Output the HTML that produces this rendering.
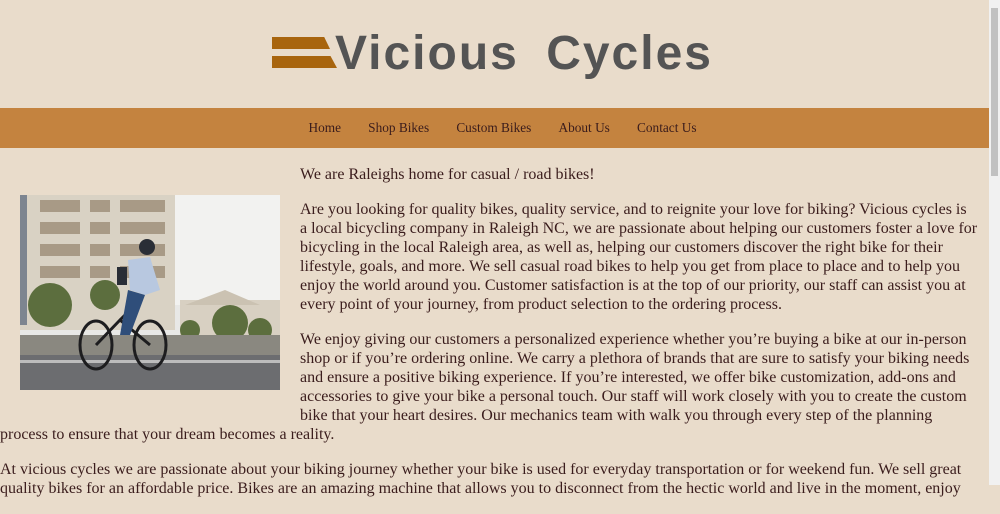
<!DOCTYPE html>
<html><head><meta charset="utf-8"><style>
html,body{margin:0;padding:0;}
body{width:1000px;height:485px;overflow:hidden;background:#e9dccb;font-family:"Liberation Serif",serif;color:#3a1c1c;position:relative;}
.wrap{width:989px;position:absolute;left:0;top:0;}
header{height:108px;position:relative;}
.bar{position:absolute;background:#a8650e;height:12px;}
.logotext{position:absolute;left:335px;top:24px;font-family:"Liberation Sans",sans-serif;font-weight:bold;font-size:48px;color:#545454;letter-spacing:2px;word-spacing:12px;white-space:nowrap;line-height:60px;}
nav{height:40px;background:#c4833f;text-align:center;font-size:13.3px;line-height:40px;padding-left:16px;}
nav span{display:inline-block;margin:0 13.6px;}
.content{position:relative;font-size:16px;line-height:19px;padding-top:1px;}
.content p{margin:16px 0;}
.l{white-space:nowrap;}
.img{position:absolute;left:20px;top:47px;width:260px;height:195px;}
.ind{padding-left:300px;}
.sb{position:absolute;right:0;top:0;width:11px;height:485px;background:#f1f1f1;}
.sb div{position:absolute;left:2px;top:8px;width:7px;height:168px;background:#c1c1c1;}
</style></head><body>
<div class="wrap">
<header>
<div class="bar" style="left:272px;top:37px;width:58px;clip-path:polygon(0 0,90% 0,100% 100%,0 100%);"></div>
<div class="bar" style="left:272px;top:56px;width:65px;clip-path:polygon(0 0,90% 0,100% 100%,0 100%);"></div>
<div class="logotext">Vicious Cycles</div>
</header>
<nav><span>Home</span><span>Shop Bikes</span><span>Custom Bikes</span><span>About Us</span><span>Contact Us</span></nav>
<div class="content">
<svg class="img" viewBox="0 0 260 195" width="260" height="195">
<rect width="260" height="195" fill="#e8e8e6"/>
<rect x="155" y="0" width="105" height="110" fill="#f2f2f0"/>
<rect x="0" y="0" width="155" height="135" fill="#d9d2c4"/>
<rect x="0" y="0" width="7" height="130" fill="#7d8590"/>
<g fill="#a89a86">
<rect x="20" y="5" width="40" height="12"/><rect x="70" y="5" width="20" height="12"/><rect x="100" y="5" width="45" height="12"/>
<rect x="20" y="27" width="40" height="12"/><rect x="70" y="27" width="20" height="12"/><rect x="100" y="27" width="45" height="12"/>
<rect x="20" y="49" width="40" height="12"/><rect x="70" y="49" width="20" height="12"/><rect x="100" y="49" width="45" height="12"/>
<rect x="20" y="71" width="40" height="12"/><rect x="70" y="71" width="20" height="12"/><rect x="100" y="71" width="45" height="12"/>
</g>
<rect x="160" y="105" width="100" height="60" fill="#d8d0c2"/>
<polygon points="165,110 205,95 240,110" fill="#cbc2b2"/>
<g fill="#5c6e3e"><circle cx="30" cy="110" r="22"/><circle cx="85" cy="100" r="15"/><circle cx="210" cy="128" r="18"/><circle cx="240" cy="135" r="12"/><circle cx="170" cy="135" r="10"/></g>
<rect x="0" y="140" width="260" height="25" fill="#8a8880"/>
<rect x="0" y="160" width="260" height="35" fill="#6c6d70"/>
<rect x="0" y="165" width="260" height="3" fill="#bcbcbc"/>
<g fill="none" stroke="#1d1d1f" stroke-width="3"><ellipse cx="76" cy="150" rx="16" ry="24"/><ellipse cx="130" cy="150" rx="16" ry="24"/><path d="M76 150 L100 125 L130 150 M100 125 L120 105"/></g>
<path d="M108 65 L130 62 L140 95 L125 100 L110 95 Z" fill="#b8c8e0"/>
<path d="M108 95 L125 100 L110 140 L100 140 Z" fill="#2f4e7a"/>
<circle cx="127" cy="52" r="8" fill="#2a2e36"/>
<rect x="97" y="72" width="10" height="18" fill="#2a2e36"/>
</svg>
<p class="ind" style="margin-top:16px">We are Raleighs home for casual / road bikes!</p>
<p class="ind"><span class="l">Are you looking for quality bikes, quality service, and to reignite your love for biking? Vicious cycles is</span><br><span class="l">a local bicycling company in Raleigh NC, we are passionate about helping our customers foster a love for</span><br><span class="l">bicycling in the local Raleigh area, as well as, helping our customers discover the right bike for their</span><br><span class="l">lifestyle, goals, and more. We sell casual road bikes to help you get from place to place and to help you</span><br><span class="l">enjoy the world around you. Customer satisfaction is at the top of our priority, our staff can assist you at</span><br><span class="l">every point of your journey, from product selection to the ordering process.</span></p>
<p style="margin-top:13px"><span class="ind l" style="display:inline-block">We enjoy giving our customers a personalized experience whether you’re buying a bike at our in-person</span><br><span class="ind l" style="display:inline-block">shop or if you’re ordering online. We carry a plethora of brands that are sure to satisfy your biking needs</span><br><span class="ind l" style="display:inline-block">and ensure a positive biking experience. If you’re interested, we offer bike customization, add-ons and</span><br><span class="ind l" style="display:inline-block">accessories to give your bike a personal touch. Our staff will work closely with you to create the custom</span><br><span class="ind l" style="display:inline-block">bike that your heart desires. Our mechanics team with walk you through every step of the planning</span><br><span class="l">process to ensure that your dream becomes a reality.</span></p>
<p><span class="l">At vicious cycles we are passionate about your biking journey whether your bike is used for everyday transportation or for weekend fun. We sell great</span><br><span class="l">quality bikes for an affordable price. Bikes are an amazing machine that allows you to disconnect from the hectic world and live in the moment, enjoy</span></p>
</div>
</div>
<div class="sb"><div></div></div>
</body></html>
